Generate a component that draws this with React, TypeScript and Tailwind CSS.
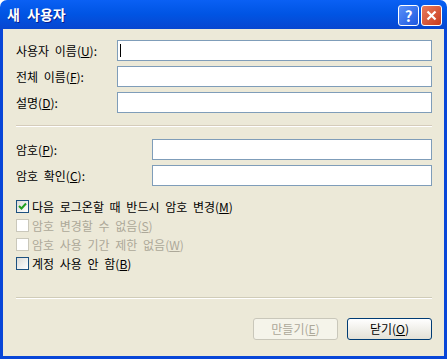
const font = { fontFamily: '"Noto Sans CJK KR", "Noto Sans", sans-serif' }

const Field = ({ label, k, rest, labelW, cursor }: { label: string; k: string; rest: string; labelW: string; cursor?: boolean }) => (
  <div className="flex h-[21px] items-center">
    <label className={`${labelW} shrink-0 text-[12px] leading-none text-black [word-spacing:3px]`}>
      {label}(<span className="underline">{k}</span>){rest}
    </label>
    <div className="flex h-[21px] flex-1 items-center border border-[#7F9DB9] bg-white pl-[2px]">
      {cursor && <div className="h-[13px] w-px bg-black" />}
    </div>
  </div>
)

const Check = ({ label, k, checked, disabled }: { label: string; k: string; checked?: boolean; disabled?: boolean }) => (
  <div className="flex h-[19px] items-center">
    <div
      className={`flex h-[13px] w-[13px] items-center justify-center border ${
        disabled ? 'border-[#CAC8BB] bg-white' : 'border-[#1C5180] bg-gradient-to-br from-[#DCDCD7] to-white'
      }`}
    >
      {checked && (
        <svg width="9" height="9" viewBox="0 0 9 9">
          <path d="M1 4 L3.5 6.5 L8 1.5" stroke="#21A121" strokeWidth="2" fill="none" />
        </svg>
      )}
    </div>
    <span className={`ml-[3px] text-[12px] leading-none [word-spacing:3px] ${disabled ? 'text-[#ACA899]' : 'text-black'}`}>
      {label}(<span className="underline">{k}</span>)
    </span>
  </div>
)

export default function App() {
  return (
    <div className="h-[359px] w-[447px] bg-white" style={font}>
      <div className="flex h-full flex-col">
        {/* 제목 표시줄 */}
        <div className="flex h-[29px] items-center rounded-t-[7px] bg-gradient-to-b from-[#0A60F4] via-[#0054E3] to-[#0846D0] pl-[7px] pr-[5px]">
          <span className="text-[14px] font-bold text-white [word-spacing:4px] [text-shadow:1px_1px_0_#0A1E8C]">새 사용자</span>
          <div className="ml-auto flex gap-[2px] pt-[2px]">
            <div className="flex h-[21px] w-[21px] items-center justify-center rounded-[3px] border border-white bg-gradient-to-br from-[#5A90F8] to-[#1D56E0]">
              <span className="text-[15px] font-bold leading-none text-white">?</span>
            </div>
            <div className="flex h-[21px] w-[21px] items-center justify-center rounded-[3px] border border-white bg-gradient-to-br from-[#E97A5C] to-[#C8391B]">
              <svg width="11" height="11" viewBox="0 0 11 11">
                <path d="M1.5 1.5 L9.5 9.5 M9.5 1.5 L1.5 9.5" stroke="white" strokeWidth="2.2" />
              </svg>
            </div>
          </div>
        </div>

        {/* 본문 */}
        <div className="flex flex-1 flex-col border-x-[3px] border-b-[3px] border-[#0846D8] bg-[#ECE9D8] pl-[13px] pr-[12px]">
          <div className="mt-[11px] flex flex-col gap-[5px]">
            <Field label="사용자 이름" k="U" rest=":" labelW="w-[101px]" cursor />
            <Field label="전체 이름" k="F" rest=":" labelW="w-[101px]" />
            <Field label="설명" k="D" rest=":" labelW="w-[101px]" />
          </div>

          <div className="mt-[12px] border-t border-b border-t-[#D5CCBB] border-b-white" />

          <div className="mt-[12px] flex flex-col gap-[5px]">
            <Field label="암호" k="P" rest=":" labelW="w-[136px]" />
            <Field label="암호 확인" k="C" rest=":" labelW="w-[136px]" />
          </div>

          <div className="mt-[11px] flex flex-col">
            <Check label="다음 로그온할 때 반드시 암호 변경" k="M" checked />
            <Check label="암호 변경할 수 없음" k="S" disabled />
            <Check label="암호 사용 기간 제한 없음" k="W" disabled />
            <Check label="계정 사용 안 함" k="B" />
          </div>

          <div className="mt-[24px] border-t border-b border-t-[#D0CCB8] border-b-white" />

          <div className="mt-[19px] flex justify-end gap-[9px]">
            <button className="h-[22px] w-[85px] rounded-[3px] border border-[#C9C7BA] bg-[#F5F4EA] text-[12px] text-[#ACA899]">
              만들기(<span className="underline">E</span>)
            </button>
            <button className="h-[22px] w-[85px] rounded-[3px] border border-[#003C74] bg-gradient-to-b from-white to-[#E3E1D6] text-[12px] text-black">
              닫기(<span className="underline">O</span>)
            </button>
          </div>
        </div>
      </div>
    </div>
  )
}
